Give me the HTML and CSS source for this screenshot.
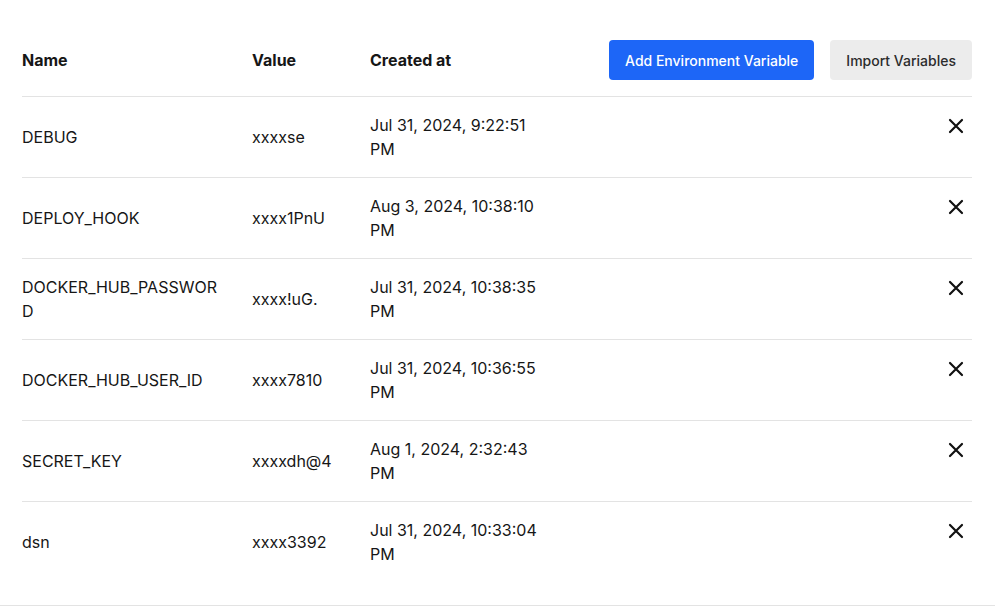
FILE: index.html
```html
<!DOCTYPE html>
<html lang="en">
<head>
<meta charset="utf-8">
<title>Environment Variables</title>
<link rel="stylesheet" href="styles.css">
</head>
<body>
<div class="page">
  <div class="row head">
    <div class="cell name">Name</div>
    <div class="cell value">Value</div>
    <div class="cell date">Created at</div>
    <div class="cell actions">
      <button class="btn primary">Add Environment Variable</button>
      <button class="btn secondary">Import Variables</button>
    </div>
  </div>

  <div class="row">
    <div class="cell name">DEBUG</div>
    <div class="cell value">xxxxse</div>
    <div class="cell date">Jul 31, 2024, 9:22:51 PM</div>
    <div class="cell actions"><button class="del" aria-label="Delete"><svg viewBox="0 0 24 24" width="24" height="24"><path d="M18 6 6 18M6 6l12 12"/></svg></button></div>
  </div>
  <div class="row">
    <div class="cell name">DEPLOY_HOOK</div>
    <div class="cell value">xxxx1PnU</div>
    <div class="cell date">Aug 3, 2024, 10:38:10 PM</div>
    <div class="cell actions"><button class="del" aria-label="Delete"><svg viewBox="0 0 24 24" width="24" height="24"><path d="M18 6 6 18M6 6l12 12"/></svg></button></div>
  </div>
  <div class="row">
    <div class="cell name">DOCKER_HUB_PASSWORD</div>
    <div class="cell value">xxxx!uG.</div>
    <div class="cell date">Jul 31, 2024, 10:38:35 PM</div>
    <div class="cell actions"><button class="del" aria-label="Delete"><svg viewBox="0 0 24 24" width="24" height="24"><path d="M18 6 6 18M6 6l12 12"/></svg></button></div>
  </div>
  <div class="row">
    <div class="cell name">DOCKER_HUB_USER_ID</div>
    <div class="cell value">xxxx7810</div>
    <div class="cell date">Jul 31, 2024, 10:36:55 PM</div>
    <div class="cell actions"><button class="del" aria-label="Delete"><svg viewBox="0 0 24 24" width="24" height="24"><path d="M18 6 6 18M6 6l12 12"/></svg></button></div>
  </div>
  <div class="row">
    <div class="cell name">SECRET_KEY</div>
    <div class="cell value">xxxxdh@4</div>
    <div class="cell date">Aug 1, 2024, 2:32:43 PM</div>
    <div class="cell actions"><button class="del" aria-label="Delete"><svg viewBox="0 0 24 24" width="24" height="24"><path d="M18 6 6 18M6 6l12 12"/></svg></button></div>
  </div>
  <div class="row">
    <div class="cell name">dsn</div>
    <div class="cell value">xxxx3392</div>
    <div class="cell date">Jul 31, 2024, 10:33:04 PM</div>
    <div class="cell actions"><button class="del" aria-label="Delete"><svg viewBox="0 0 24 24" width="24" height="24"><path d="M18 6 6 18M6 6l12 12"/></svg></button></div>
  </div>
</div>
</body>
</html>
```
FILE: styles.css
```css
* { box-sizing: border-box; }
html, body { margin: 0; background: #fff; }
body {
  font-family: Inter, "Liberation Sans", sans-serif;
  font-size: 16px;
  line-height: 24px;
  color: #161616;
}
.page {
  min-height: 606px;
  padding: 24px 23px 23px 22px;
  border-bottom: 1px solid #e3e3e3;
}
.row {
  display: grid;
  grid-template-columns: 230px 118px 186px 1fr;
  align-items: center;
  padding: 16px 0;
  border-top: 1px solid #e3e3e3;
}
.row.head {
  border-top: none;
  font-weight: 700;
}
.cell.name { padding-right: 32px; word-break: break-all; }
.cell.date { padding-right: 16px; }
.cell.actions {
  display: flex;
  justify-content: flex-end;
  gap: 16px;
}
.btn {
  height: 40px;
  padding: 1px 16px 0;
  border: none;
  border-radius: 4px;
  font-family: inherit;
  font-size: 14px;
  font-weight: 500;
  line-height: 20px;
  cursor: pointer;
}
.btn.primary { background: #1d66f7; color: #fff; }
.btn.secondary { background: #ececec; color: #2b2b2b; }
.row:not(.head) .cell.actions { align-self: start; }
.del {
  display: block;
  width: 24px;
  height: 24px;
  padding: 0;
  margin: 1px 4px 0 0;
  border: none;
  background: none;
  cursor: pointer;
}
.del svg {
  display: block;
  fill: none;
  stroke: #111;
  stroke-width: 2.2;
  stroke-linecap: round;
}
```
